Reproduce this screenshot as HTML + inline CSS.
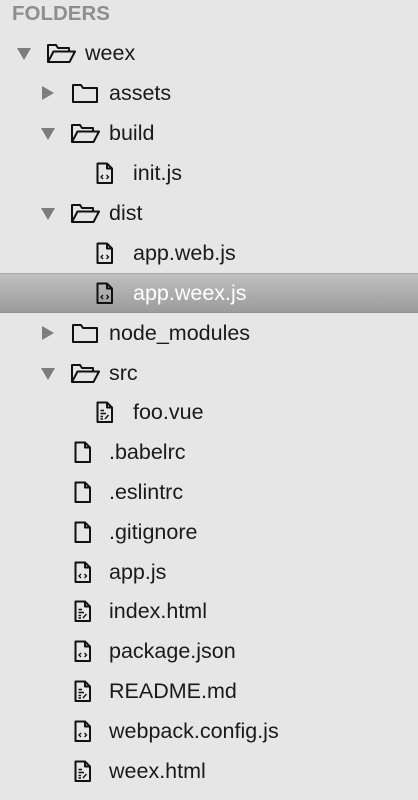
<!DOCTYPE html>
<html><head><style>
body{margin:0;width:418px;height:800px;background:#e6e6e6;overflow:hidden;font-family:"Liberation Sans",sans-serif;position:relative}
.h{position:absolute;left:12px;top:2px;font-size:20.5px;font-weight:bold;color:#8e8e8e}
.r{position:absolute;left:0;width:418px;height:40px}
.r span{position:absolute;top:8px;font-size:21.5px;color:#1a1a1a}
.r svg{position:absolute}
.sel{background:linear-gradient(#bfbfbf,#9c9c9c);border-top:1px solid #a8a8a8;border-bottom:1px solid #8f8f8f;height:38px}
.sel span{color:#fff}
</style></head><body>
<div class="h">FOLDERS</div>
<svg width="0" height="0" style="position:absolute">
<defs>
<g id="down"><path d="M0 0H14L7 12Z" fill="#7d7d7d"/></g>
<g id="right"><path d="M0 0L12 7L0 14Z" fill="#7d7d7d"/></g>
<g id="open"><path d="M2 20V3H10L12 6H23V9.5M2 20L7.5 9.5H29L23.5 20Z" fill="none" stroke="#111" stroke-width="2" stroke-linejoin="round"/></g>
<g id="closed"><path d="M2 3H10L12 6H26V20H2Z" fill="none" stroke="#111" stroke-width="2" stroke-linejoin="round"/></g>
<g id="file"><path d="M1.5 1.5H11L16 6.5V21H1.5Z M11 1.5V6.5H16" fill="none" stroke="#111" stroke-width="2" stroke-linejoin="round"/></g>
<g id="code"><use href="#file"/><path d="M7 13L5 15L7 17M10.5 13L12.5 15L10.5 17" fill="none" stroke="#111" stroke-width="1.3"/></g>
<g id="txt"><use href="#file"/><path d="M4.5 9.5H8M4.5 12.5H10M4.5 15.5H7M4.5 18H7M9 18L12.5 14" fill="none" stroke="#111" stroke-width="1.4"/></g>
</defs></svg>

<div class="r" style="top:33px"><svg style="left:17px;top:15px" width="14" height="12"><use href="#down"/></svg><svg style="left:46px;top:9px" width="31" height="23"><use href="#open"/></svg><span style="left:85px">weex</span></div>
<div class="r" style="top:73px"><svg style="left:42px;top:13px" width="12" height="14"><use href="#right"/></svg><svg style="left:71px;top:9px" width="29" height="23"><use href="#closed"/></svg><span style="left:109px">assets</span></div>
<div class="r" style="top:113px"><svg style="left:41px;top:15px" width="14" height="12"><use href="#down"/></svg><svg style="left:70px;top:9px" width="31" height="23"><use href="#open"/></svg><span style="left:109px">build</span></div>
<div class="r" style="top:153px"><svg style="left:96px;top:9px" width="18" height="23"><use href="#code"/></svg><span style="left:133px">init.js</span></div>
<div class="r" style="top:193px"><svg style="left:41px;top:15px" width="14" height="12"><use href="#down"/></svg><svg style="left:70px;top:9px" width="31" height="23"><use href="#open"/></svg><span style="left:109px">dist</span></div>
<div class="r" style="top:233px"><svg style="left:96px;top:9px" width="18" height="23"><use href="#code"/></svg><span style="left:133px">app.web.js</span></div>
<div class="r sel" style="top:273px"><svg style="left:96px;top:8px" width="18" height="23"><use href="#code"/></svg><span style="left:133px;top:7px">app.weex.js</span></div>
<div class="r" style="top:313px"><svg style="left:42px;top:13px" width="12" height="14"><use href="#right"/></svg><svg style="left:71px;top:9px" width="29" height="23"><use href="#closed"/></svg><span style="left:109px">node_modules</span></div>
<div class="r" style="top:353px"><svg style="left:41px;top:15px" width="14" height="12"><use href="#down"/></svg><svg style="left:70px;top:9px" width="31" height="23"><use href="#open"/></svg><span style="left:109px">src</span></div>
<div class="r" style="top:392px"><svg style="left:96px;top:9px" width="18" height="23"><use href="#txt"/></svg><span style="left:133px">foo.vue</span></div>
<div class="r" style="top:432px"><svg style="left:74px;top:9px" width="18" height="23"><use href="#file"/></svg><span style="left:109px">.babelrc</span></div>
<div class="r" style="top:472px"><svg style="left:74px;top:9px" width="18" height="23"><use href="#file"/></svg><span style="left:109px">.eslintrc</span></div>
<div class="r" style="top:512px"><svg style="left:74px;top:9px" width="18" height="23"><use href="#file"/></svg><span style="left:109px">.gitignore</span></div>
<div class="r" style="top:552px"><svg style="left:74px;top:9px" width="18" height="23"><use href="#code"/></svg><span style="left:109px">app.js</span></div>
<div class="r" style="top:591px"><svg style="left:74px;top:9px" width="18" height="23"><use href="#txt"/></svg><span style="left:109px">index.html</span></div>
<div class="r" style="top:631px"><svg style="left:74px;top:9px" width="18" height="23"><use href="#code"/></svg><span style="left:109px">package.json</span></div>
<div class="r" style="top:671px"><svg style="left:74px;top:9px" width="18" height="23"><use href="#txt"/></svg><span style="left:109px">README.md</span></div>
<div class="r" style="top:711px"><svg style="left:74px;top:9px" width="18" height="23"><use href="#code"/></svg><span style="left:109px">webpack.config.js</span></div>
<div class="r" style="top:751px"><svg style="left:74px;top:9px" width="18" height="23"><use href="#txt"/></svg><span style="left:109px">weex.html</span></div>
</body></html>
